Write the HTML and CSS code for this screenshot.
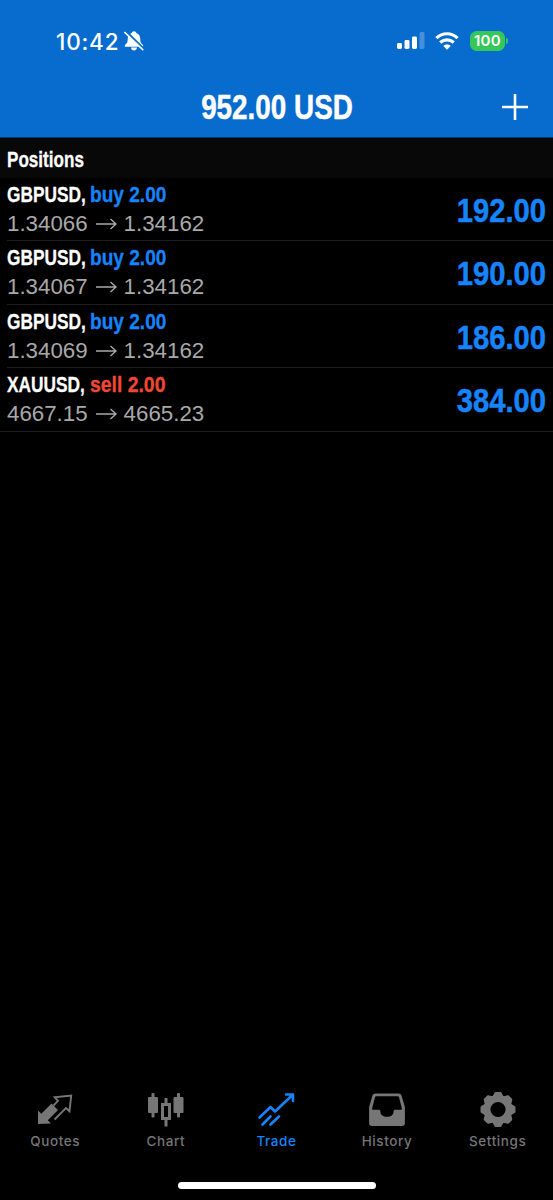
FILE: index.html
```html
<!DOCTYPE html>
<html lang="en">
<head>
<meta charset="utf-8">
<title>Trade</title>
<link rel="stylesheet" href="styles.css">
</head>
<body>
<div class="app">
  <header class="header">
    <div class="status">
      <span class="time">10:42</span>
      <svg class="bell" width="20" height="20" viewBox="0 0 20 20"><path d="M10 .3c1.200 0 2.100.8 2.300 1.800 2.700 1 4 3 4 6.200 0 3.500 1.100 4.200 2.800 5.900v1.500H.9v-1.500c1.700-1.700 2.800-2.400 2.800-5.900 0-3.200 1.300-5.200 4-6.200C7.900 1.100 8.800.3 10 .3zM7 16.500h6c-.2 1.900-1.400 3-3 3s-2.800-1.100-3-3z" fill="#fff"/><path d="M2.300.9l18 17.600" stroke="#086bce" stroke-width="2.600"/><path d="M.9 1.500l17.800 17.200" stroke="#fff" stroke-width="1.700" stroke-linecap="round"/></svg>
      <svg class="signal" width="28" height="18" viewBox="0 0 28 18" fill="#fff"><rect x="0" y="11" width="5" height="6" rx="1.400"/><rect x="7.500" y="8" width="5" height="9" rx="1.400"/><rect x="15" y="4.500" width="5" height="12.500" rx="1.400"/><rect x="22.500" y="0" width="5" height="17" rx="1.400" opacity=".25"/></svg>
      <svg class="wifi" width="24" height="18" viewBox="0 0 24 18" fill="none" stroke="#fff" stroke-width="3.200"><path d="M1.400 6.100C7.400.3 16.600.3 22.600 6.100"/><path d="M5.200 10.500c4-3.600 9.600-3.600 13.600 0"/><path d="M8.300 14c2.200-1.900 5.200-1.900 7.400 0L12 17.800z" fill="#fff" stroke="none"/></svg>
      <span class="battery">100</span><i class="battery-tip"></i>
    </div>
    <div class="titlebar">
      <h1 class="title">952.00 USD</h1>
      <svg class="plus" width="26" height="26" viewBox="0 0 26 26"><path d="M13 0v26M0 13h26" stroke="#fff" stroke-width="2.600"/></svg>
    </div>
  </header>
  <h2 class="section"><span>Positions</span></h2>
  <main class="list">
    <article class="row">
      <div class="info">
        <div class="name"><b class="symbol">GBPUSD,</b><b class="side buy">buy 2.00</b></div>
        <div class="prices"><span>1.34066</span><svg width="21" height="12" viewBox="0 0 21 12"><path d="M0 6h20M14.500 1L20 6l-5.500 5"/></svg><span>1.34162</span></div>
      </div>
      <b class="profit">192.00</b>
    </article>
    <article class="row">
      <div class="info">
        <div class="name"><b class="symbol">GBPUSD,</b><b class="side buy">buy 2.00</b></div>
        <div class="prices"><span>1.34067</span><svg width="21" height="12" viewBox="0 0 21 12"><path d="M0 6h20M14.500 1L20 6l-5.500 5"/></svg><span>1.34162</span></div>
      </div>
      <b class="profit">190.00</b>
    </article>
    <article class="row">
      <div class="info">
        <div class="name"><b class="symbol">GBPUSD,</b><b class="side buy">buy 2.00</b></div>
        <div class="prices"><span>1.34069</span><svg width="21" height="12" viewBox="0 0 21 12"><path d="M0 6h20M14.500 1L20 6l-5.500 5"/></svg><span>1.34162</span></div>
      </div>
      <b class="profit">186.00</b>
    </article>
    <article class="row">
      <div class="info">
        <div class="name"><b class="symbol">XAUUSD,</b><b class="side sell">sell 2.00</b></div>
        <div class="prices"><span>4667.15</span><svg width="21" height="12" viewBox="0 0 21 12"><path d="M0 6h20M14.500 1L20 6l-5.500 5"/></svg><span>4665.23</span></div>
      </div>
      <b class="profit">384.00</b>
    </article>
  </main>
  <nav class="tabs">
    <a class="tab"><svg width="38" height="38" viewBox="0 0 38 38"><path d="M2 34V20.500l3.300 3.200L15.500 13.500l6.500 6.500-10.200 10.200 3.200 3.300z" fill="currentColor"/><path d="M17.500 15.500l4.500-4.700-3.300-3.500 16.500-1.800-1.700 15.700-3.500-3.200L18.500 29.500" fill="none" stroke="currentColor" stroke-width="1.900"/></svg><span>Quotes</span></a>
    <a class="tab"><svg width="38" height="38" viewBox="0 0 38 38" fill="currentColor"><rect x="1" y="7" width="10" height="16" rx="1"/><rect x="4.500" y="3" width="3" height="24.500" rx="1"/><rect x="26.500" y="7" width="10" height="16" rx="1"/><rect x="30" y="3" width="3" height="24.500" rx="1"/><path d="M17.500 8h3v5h3.500v17h-3.500v6.500h-3V30H14V13h3.500zM17 16v11h4V16z" fill-rule="evenodd"/></svg><span>Chart</span></a>
    <a class="tab active"><svg width="38" height="38" viewBox="0 0 38 38" fill="none" stroke="currentColor" stroke-width="2.600" stroke-linecap="round" stroke-linejoin="round"><path d="M2.500 27.500L13.500 17l4.500 4.500L35.500 5M29 4.500h7V11M5.500 34.500l8-8M13.500 34.500l8.500-8"/></svg><span>Trade</span></a>
    <a class="tab"><svg width="38" height="38" viewBox="0 0 38 38"><path d="M7.500 3.500h23c1.500 0 2.600.9 3.100 2.300L36.600 16c.2.700.3 1.400.3 2.200v15c0 1.700-1.200 2.800-2.900 2.800H4c-1.700 0-2.900-1.100-2.900-2.800v-15c0-.8.1-1.500.3-2.200l3-10.200c.5-1.400 1.600-2.300 3.100-2.300zM8.500 6.200c-.8 0-1.300.4-1.500 1.100L4.100 18.500c-.2.800.3 1.300 1 1.300h5.600c1 0 1.700.6 1.700 1.600 0 3.400 2.800 5.400 6.600 5.400s6.600-2 6.600-5.400c0-1 .7-1.600 1.700-1.600h5.600c.7 0 1.200-.5 1-1.300L31 7.300c-.2-.7-.7-1.100-1.500-1.100z" fill="currentColor" fill-rule="evenodd"/></svg><span>History</span></a>
    <a class="tab"><svg width="38" height="38" viewBox="-19 -19.500 38 38"><g fill="currentColor"><path d="M0-14.200A14.200 14.200 0 1 0 0 14.200 14.200 14.200 0 1 0 0-14.200zM0-7.600A7.600 7.600 0 1 1 0 7.600 7.600 7.600 0 1 1 0-7.600z" fill-rule="evenodd"/><path id="tooth" d="M-6.300-12l2.600-4.200c.4-.8.9-1.300 1.700-1.300h4c.8 0 1.300.5 1.700 1.300L6.300-12l-3 2h-6.600z"/><use href="#tooth" transform="rotate(45)"/><use href="#tooth" transform="rotate(90)"/><use href="#tooth" transform="rotate(135)"/><use href="#tooth" transform="rotate(180)"/><use href="#tooth" transform="rotate(225)"/><use href="#tooth" transform="rotate(270)"/><use href="#tooth" transform="rotate(315)"/></g></svg><span>Settings</span></a>
  </nav>
  <div class="home"></div>
</div>
</body>
</html>
```
FILE: styles.css
```css
* { box-sizing: border-box; }
body { margin: 0; background: #000; color: #fff; font-family: "Liberation Sans", Arial, sans-serif; }
.app { display: flex; flex-direction: column; width: 553px; height: 1200px; overflow: hidden; }
.header { height: 138px; background: #086bce; border-bottom: 1px solid #063a78; flex: none; }
.status { display: flex; align-items: center; height: 82px; padding-left: 56px; font-family: Inter, sans-serif; }
.time { width: 68px; font-size: 22.5px; font-weight: 500; letter-spacing: 0.8px; }
.signal { margin-left: 253px; }
.wifi { margin-left: 10px; }
.battery { width: 35px; height: 20px; margin-left: 11px; border-radius: 6.5px; background: #35c759; font-size: 15px; font-weight: 600; line-height: 20px; text-align: center; letter-spacing: 0.3px; }
.battery-tip { width: 2px; height: 6px; margin-left: 1px; border-radius: 0 2px 2px 0; background: #35c759; }
.titlebar { display: grid; grid-template-columns: 1fr auto 1fr; align-items: center; height: 50px; }
.title { grid-column: 2; margin: 0; font-size: 34.5px; line-height: 50px; white-space: nowrap; transform: scaleX(0.807); -webkit-text-stroke: 0.5px; }
.plus { justify-self: end; margin-right: 25px; }
.section { flex: none; height: 40px; margin: 0; padding: 2px 7px 0; background: #080808; font-size: 21.5px; line-height: 40px; }
.section span { display: inline-block; transform: scaleX(0.795); transform-origin: left; -webkit-text-stroke: 0.3px; }
.row { display: flex; justify-content: space-between; height: 63.4px; padding: 0 7px; background: linear-gradient(#1c1c1e, #1c1c1e) 7px 100% / 100% 1px no-repeat; }
.row:last-child { background-position: 0 100%; }
.name { display: flex; height: 32px; font-size: 22.3px; line-height: 33px; white-space: nowrap; -webkit-text-stroke: 0.3px; }
.symbol { width: 83px; transform: scaleX(0.775); transform-origin: left; }
.side { transform-origin: left; }
.buy { color: #1684fb; transform: scaleX(0.856); }
.sell { color: #f24735; transform: scaleX(0.869); }
.prices { display: flex; align-items: center; height: 28px; color: #a9a9a9; font-size: 22.3px; line-height: 28px; }
.prices svg { margin: 0 7px 0 8px; fill: none; stroke: #a9a9a9; stroke-width: 1.4; }
.profit { color: #1684fb; font-size: 34px; line-height: 64px; transform: scaleX(0.858); transform-origin: right; -webkit-text-stroke: 0.5px; }
.tabs { display: grid; grid-template-columns: repeat(5, 1fr); margin-top: auto; height: 80px; }
.tab { display: flex; flex-direction: column; align-items: center; color: #767676; font: 500 13.5px/20px Inter, sans-serif; letter-spacing: 0.6px; }
.tab span { margin-top: 3px; }
.active { color: #1684fb; }
.home { flex: none; width: 198px; height: 7px; margin: 12px 0 11px 178px; border-radius: 4px; background: #fff; }
```
